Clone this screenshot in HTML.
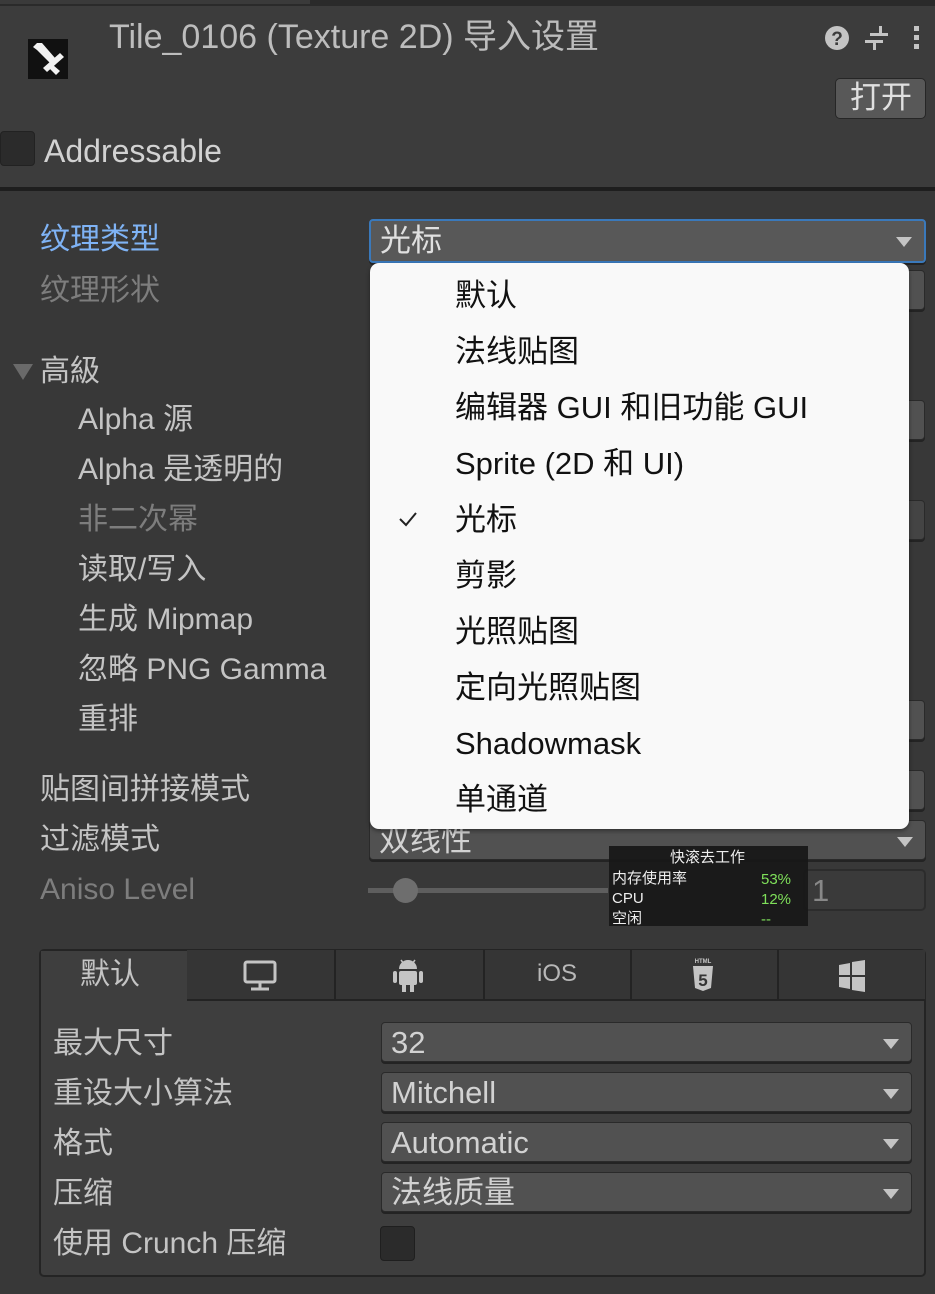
<!DOCTYPE html>
<html><head><meta charset="utf-8"><style>
*{margin:0;padding:0;box-sizing:border-box}
body{width:935px;height:1294px;background:#383838;position:relative;overflow:hidden;font-family:"Liberation Sans","Noto Sans CJK SC",sans-serif;color:#c4c4c4;font-size:30px}
.a{position:absolute;white-space:nowrap;line-height:1}
.fld{position:absolute;background:#515151;border:1px solid #2a2a2a;border-radius:4px;height:40px;box-shadow:0 2px 0 #232323}
.fld span{position:absolute;left:9px;top:4px;font-size:31px;color:#d2d2d2;line-height:1.05}
.arr{position:absolute;right:12px;top:16px;width:0;height:0;border-left:8px solid transparent;border-right:8px solid transparent;border-top:10px solid #c4c4c4}
.menu{position:absolute;left:370px;top:263px;width:539px;height:566px;background:#f9f9f9;border-radius:9px;box-shadow:0 2px 4px rgba(0,0,0,.4)}
.menu div{position:absolute;left:85px;font-size:31px;color:#111;line-height:1}
.tab{position:absolute;top:950px;height:51px;background:#353535;border-right:2px solid #232323;border-bottom:2px solid #232323}
</style></head><body>
<div class="a" style="left:0;top:0;width:935px;height:6px;background:#2a2a2a"></div>
<div class="a" style="left:0;top:0;width:310px;height:4px;background:#3a3a3a"></div>
<div class="a" style="left:0;top:6px;width:935px;height:183px;background:#3c3c3c"></div>
<svg class="a" style="left:27px;top:38px" width="42" height="42" viewBox="0 0 42 42"><rect x="1" y="1" width="40" height="40" fill="#111"/><path d="M6 9 L10 5 L15 5 L28 20 L23 25 L10 12 Z" fill="#f2f2f2"/><path d="M16 30 L33 15 L37 19 L20 34 Z" fill="#f2f2f2"/><path d="M26 27 L33 33 L29 37 L23 31Z" fill="#f2f2f2"/></svg>
<div class="a" style="left:109px;top:20px;font-size:34px;color:#bdbdbd">Tile_0106 (Texture 2D) 导入设置</div>
<svg class="a" style="left:824px;top:25px" width="26" height="26"><circle cx="13" cy="13" r="12" fill="#c4c4c4"/><text x="13" y="20" font-size="19" font-weight="bold" text-anchor="middle" fill="#3c3c3c" font-family="Liberation Sans">?</text></svg>
<svg class="a" style="left:864px;top:25px" width="26" height="26" fill="#c4c4c4"><rect x="15" y="1" width="3" height="10"/><rect x="6" y="8" width="18" height="3"/><rect x="1" y="15" width="18" height="3"/><rect x="9" y="15" width="3" height="10"/></svg>
<svg class="a" style="left:913px;top:25px" width="8" height="26" fill="#c4c4c4"><rect x="1" y="1" width="5" height="5"/><rect x="1" y="10" width="5" height="5"/><rect x="1" y="19" width="5" height="5"/></svg>
<div class="a" style="left:835px;top:78px;width:91px;height:41px;background:#585858;border:1px solid #262626;border-radius:5px"></div>
<div class="a" style="left:850px;top:82px;font-size:31px;color:#e0e0e0">打开</div>
<div class="a" style="left:0;top:131px;width:35px;height:35px;background:#2b2b2b;border:1px solid #222;border-radius:4px"></div>
<div class="a" style="left:44px;top:135px;font-size:32px;color:#d2d2d2">Addressable</div>
<div class="a" style="left:0;top:187px;width:935px;height:4px;background:#1e1e1e"></div>

<div class="a" style="left:40px;top:225px;color:#7fb3f5">纹理类型</div>
<div class="a" style="left:40px;top:276px;color:#7d7d7d">纹理形状</div>
<div class="a" style="left:13px;top:364px;width:0;height:0;border-left:10px solid transparent;border-right:10px solid transparent;border-top:16px solid #6a6a6a"></div>
<div class="a" style="left:40px;top:357px">高級</div>
<div class="a" style="left:78px;top:405px">Alpha 源</div>
<div class="a" style="left:78px;top:455px">Alpha 是透明的</div>
<div class="a" style="left:78px;top:505px;color:#7d7d7d">非二次幂</div>
<div class="a" style="left:78px;top:555px">读取/写入</div>
<div class="a" style="left:78px;top:605px">生成 Mipmap</div>
<div class="a" style="left:78px;top:655px">忽略 PNG Gamma</div>
<div class="a" style="left:78px;top:705px">重排</div>
<div class="a" style="left:40px;top:775px">贴图间拼接模式</div>
<div class="a" style="left:40px;top:825px">过滤模式</div>
<div class="a" style="left:40px;top:875px;color:#7d7d7d">Aniso Level</div>

<div class="fld" style="left:369px;top:219px;width:557px;height:44px;border:2px solid #3a79bb;background:#585858"><span style="color:#e0e0e0">光标</span><i class="arr"></i></div>
<div class="fld" style="left:880px;top:270px;width:45px"></div>
<div class="fld" style="left:880px;top:400px;width:45px"></div>
<div class="fld" style="left:880px;top:500px;width:45px;background:#444"></div>
<div class="fld" style="left:880px;top:700px;width:45px"></div>
<div class="fld" style="left:880px;top:770px;width:45px"></div>
<div class="fld" style="left:369px;top:820px;width:557px"><span>双线性</span><i class="arr"></i></div>
<div class="a" style="left:368px;top:888px;width:240px;height:5px;background:#5e5e5e"></div>
<div class="a" style="left:393px;top:878px;width:25px;height:25px;border-radius:50%;background:#6e6e6e"></div>
<div class="a" style="left:803px;top:869px;width:123px;height:42px;border:2px solid #2c2c2c;border-radius:5px;background:#3a3a3a"></div>
<div class="a" style="left:812px;top:875px;font-size:31px;color:#888">1</div>
<div class="a" style="left:609px;top:846px;width:199px;height:80px;background:rgba(24,24,24,.95)"></div>
<div class="a" style="left:670px;top:850px;font-size:15px;color:#eee">快滚去工作</div>
<div class="a" style="left:612px;top:871px;font-size:15px;color:#eee">内存使用率</div>
<div class="a" style="left:612px;top:891px;font-size:15px;color:#eee">CPU</div>
<div class="a" style="left:612px;top:911px;font-size:15px;color:#eee">空闲</div>
<div class="a" style="left:761px;top:872px;font-size:15px;color:#7fe05a">53%</div>
<div class="a" style="left:761px;top:892px;font-size:15px;color:#7fe05a">12%</div>
<div class="a" style="left:761px;top:912px;font-size:15px;color:#7fe05a">--</div>

<div class="menu">
<div style="top:17px">默认</div>
<div style="top:73px">法线贴图</div>
<div style="top:129px">编辑器 GUI 和旧功能 GUI</div>
<div style="top:185px">Sprite (2D 和 UI)</div>
<div style="top:241px">光标</div>
<div style="top:297px">剪影</div>
<div style="top:353px">光照贴图</div>
<div style="top:409px">定向光照贴图</div>
<div style="top:465px">Shadowmask</div>
<div style="top:521px">单通道</div>
<svg style="position:absolute;left:28px;top:248px" width="20" height="16"><path d="M2 8 L8 14 L18 2" stroke="#222" stroke-width="2" fill="none"/></svg>
</div>

<div class="a" style="left:39px;top:949px;width:887px;height:328px;border:2px solid #242424;border-radius:5px;background:#3e3e3e"></div>
<div class="a" style="left:41px;top:951px;width:145px;height:50px;background:#3e3e3e"></div>
<div class="a" style="left:80px;top:960px;font-size:30px">默认</div>
<div class="tab" style="left:187px;width:149px"></div>
<div class="tab" style="left:336px;width:149px"></div>
<div class="tab" style="left:485px;width:147px"></div>
<div class="tab" style="left:632px;width:147px"></div>
<div class="tab" style="left:779px;width:146px;border-right:none"></div>
<svg class="a" style="left:243px;top:960px" width="34" height="32" fill="none" stroke="#c4c4c4" stroke-width="3"><rect x="2" y="2" width="30" height="20" rx="2"/><path d="M17 22 V29 M8 29 H26"/></svg>
<svg class="a" style="left:392px;top:958px" width="32" height="36" fill="#c4c4c4"><path d="M7 11 A9 9 0 0 1 25 11 Z"/><rect x="7" y="13" width="18" height="14" rx="2"/><rect x="1" y="13" width="4" height="12" rx="2"/><rect x="27" y="13" width="4" height="12" rx="2"/><rect x="10" y="26" width="4" height="8"/><rect x="18" y="26" width="4" height="8"/><path d="M9 2 L12 6 M23 2 L20 6" stroke="#c4c4c4" stroke-width="1.5"/></svg>
<div class="a" style="left:537px;top:962px;font-size:24px;color:#b8b8b8">iOS</div>
<svg class="a" style="left:690px;top:958px" width="26" height="36"><text x="13" y="5" font-size="6" text-anchor="middle" fill="#c4c4c4" font-weight="bold">HTML</text><path d="M3 8 H23 L21 30 L13 33 L5 30 Z" fill="#c4c4c4"/><text x="13" y="28" font-size="17" font-weight="bold" text-anchor="middle" fill="#353535" font-family="Liberation Sans">5</text></svg>
<svg class="a" style="left:838px;top:960px" width="28" height="32" fill="#c4c4c4"><path d="M1 5 L12 3 V15 H1 Z M14 2 L27 0 V15 H14 Z M1 17 H12 V29 L1 27 Z M14 17 H27 V32 L14 30 Z"/></svg>

<div class="a" style="left:53px;top:1029px">最大尺寸</div>
<div class="a" style="left:53px;top:1079px">重设大小算法</div>
<div class="a" style="left:53px;top:1129px">格式</div>
<div class="a" style="left:53px;top:1179px">压缩</div>
<div class="a" style="left:53px;top:1229px">使用 Crunch 压缩</div>
<div class="fld" style="left:381px;top:1022px;width:531px"><span>32</span><i class="arr"></i></div>
<div class="fld" style="left:381px;top:1072px;width:531px"><span>Mitchell</span><i class="arr"></i></div>
<div class="fld" style="left:381px;top:1122px;width:531px"><span>Automatic</span><i class="arr"></i></div>
<div class="fld" style="left:381px;top:1172px;width:531px"><span>法线质量</span><i class="arr"></i></div>
<div class="a" style="left:380px;top:1226px;width:35px;height:35px;background:#2b2b2b;border:1px solid #1f1f1f;border-radius:4px"></div>
</body></html>
